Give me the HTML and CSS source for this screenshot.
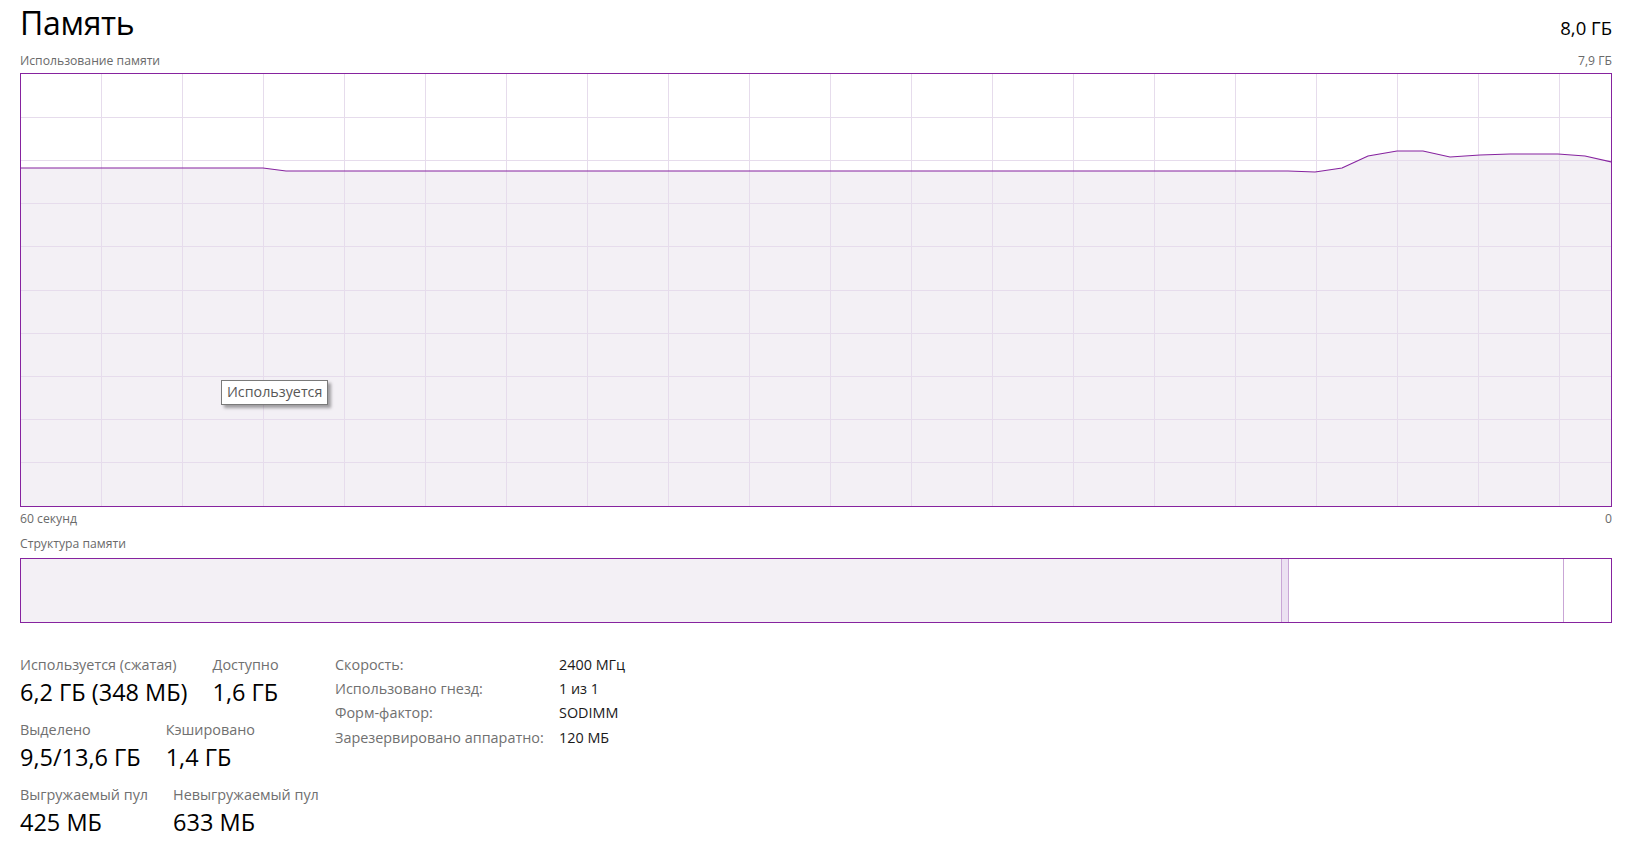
FILE: index.html
```html
<!DOCTYPE html>
<html lang="ru">
<head>
<meta charset="utf-8">
<title>Память</title>
<link rel="stylesheet" href="styles.css">
</head>
<body>
<div class="page">
  <div class="header">
    <div class="title">Память</div>
    <div class="total">8,0 ГБ</div>
  </div>
  <div class="caption-row top-caption">
    <span>Использование памяти</span>
    <span>7,9 ГБ</span>
  </div>
  <div class="chart">
    <svg class="chart-svg" viewBox="0 0 1590 432" preserveAspectRatio="none">
      <polygon class="area" points="-1,94 242,94 265,97 1267,97 1294,98 1321,94 1347,82 1376,77 1402,77 1429,83 1459,81 1489,80 1537,80 1564,82 1591,88 1591,433 -1,433"/>
      <g class="grid">
        <line x1="80" y1="0" x2="80" y2="432"/>
        <line x1="161" y1="0" x2="161" y2="432"/>
        <line x1="242" y1="0" x2="242" y2="432"/>
        <line x1="323" y1="0" x2="323" y2="432"/>
        <line x1="404" y1="0" x2="404" y2="432"/>
        <line x1="485" y1="0" x2="485" y2="432"/>
        <line x1="566" y1="0" x2="566" y2="432"/>
        <line x1="647" y1="0" x2="647" y2="432"/>
        <line x1="728" y1="0" x2="728" y2="432"/>
        <line x1="809" y1="0" x2="809" y2="432"/>
        <line x1="890" y1="0" x2="890" y2="432"/>
        <line x1="971" y1="0" x2="971" y2="432"/>
        <line x1="1052" y1="0" x2="1052" y2="432"/>
        <line x1="1133" y1="0" x2="1133" y2="432"/>
        <line x1="1214" y1="0" x2="1214" y2="432"/>
        <line x1="1295" y1="0" x2="1295" y2="432"/>
        <line x1="1376" y1="0" x2="1376" y2="432"/>
        <line x1="1457" y1="0" x2="1457" y2="432"/>
        <line x1="1538" y1="0" x2="1538" y2="432"/>
        <line x1="0" y1="43.2" x2="1590" y2="43.2"/>
        <line x1="0" y1="86.4" x2="1590" y2="86.4"/>
        <line x1="0" y1="129.6" x2="1590" y2="129.6"/>
        <line x1="0" y1="172.8" x2="1590" y2="172.8"/>
        <line x1="0" y1="216" x2="1590" y2="216"/>
        <line x1="0" y1="259.2" x2="1590" y2="259.2"/>
        <line x1="0" y1="302.4" x2="1590" y2="302.4"/>
        <line x1="0" y1="345.6" x2="1590" y2="345.6"/>
        <line x1="0" y1="388.8" x2="1590" y2="388.8"/>
      </g>
      <polyline class="series" points="-1,94 242,94 265,97 1267,97 1294,98 1321,94 1347,82 1376,77 1402,77 1429,83 1459,81 1489,80 1537,80 1564,82 1591,88"/>
    </svg>
    <div class="tooltip">Используется</div>
  </div>
  <div class="caption-row bottom-caption">
    <span>60 секунд</span>
    <span>0</span>
  </div>
  <div class="caption-row struct-caption">
    <span>Структура памяти</span>
  </div>
  <div class="structure">
    <div class="seg seg-used" style="width: 1261px"></div>
    <div class="seg seg-modified" style="width: 7px"></div>
    <div class="seg seg-standby" style="width: 275px"></div>
    <div class="seg seg-free"></div>
  </div>
  <div class="details">
    <div class="stats">
      <div class="stat-row">
        <div class="stat"><div class="stat-label">Используется (сжатая)</div><div class="stat-value">6,2 ГБ (348 МБ)</div></div>
        <div class="stat"><div class="stat-label">Доступно</div><div class="stat-value">1,6 ГБ</div></div>
      </div>
      <div class="stat-row">
        <div class="stat"><div class="stat-label">Выделено</div><div class="stat-value">9,5/13,6 ГБ</div></div>
        <div class="stat"><div class="stat-label">Кэшировано</div><div class="stat-value">1,4 ГБ</div></div>
      </div>
      <div class="stat-row">
        <div class="stat"><div class="stat-label">Выгружаемый пул</div><div class="stat-value">425 МБ</div></div>
        <div class="stat"><div class="stat-label">Невыгружаемый пул</div><div class="stat-value">633 МБ</div></div>
      </div>
    </div>
    <div class="props">
      <div class="prop-label">Скорость:</div><div class="prop-value">2400 МГц</div>
      <div class="prop-label">Использовано гнезд:</div><div class="prop-value">1 из 1</div>
      <div class="prop-label">Форм-фактор:</div><div class="prop-value">SODIMM</div>
      <div class="prop-label">Зарезервировано аппаратно:</div><div class="prop-value">120 МБ</div>
    </div>
  </div>
</div>
</body>
</html>
```

FILE: styles.css
```css
html, body {
  margin: 0;
  padding: 0;
  background: #ffffff;
  overflow: hidden;
}

body {
  font-family: "Open Sans", "Noto Sans", "Liberation Sans", sans-serif;
  color: #000;
}

.page {
  padding: 0 17px 0 20px;
  height: 844px;
  box-sizing: border-box;
}

.header {
  display: flex;
  justify-content: space-between;
  align-items: baseline;
  height: 52px;
  padding-top: 3px;
  box-sizing: border-box;
}

.title {
  font-size: 32px;
  line-height: 40px;
  font-weight: 400;
  letter-spacing: -0.3px;
}

.total {
  font-size: 18.5px;
  line-height: 40px;
}

.caption-row {
  display: flex;
  justify-content: space-between;
  font-size: 12.2px;
  color: #6a6a6a;
  line-height: 18px;
}

.top-caption {
  height: 21px;
}

.chart {
  position: relative;
  height: 434px;
  border: 1px solid #86239f;
  box-sizing: border-box;
  background: #fff;
}

.chart-svg {
  display: block;
  width: 100%;
  height: 100%;
}

.area {
  fill: #f3f0f5;
}

.grid line {
  stroke: #e6dcec;
  stroke-width: 1;
  vector-effect: non-scaling-stroke;
  shape-rendering: crispEdges;
}

.series {
  fill: none;
  stroke: #86239f;
  stroke-width: 1.2;
  vector-effect: non-scaling-stroke;
}

.tooltip {
  position: absolute;
  left: 200px;
  top: 306px;
  padding: 1px 5px 2px;
  border: 1px solid #7a7a7a;
  background: #fff;
  font-size: 14.3px;
  line-height: 20px;
  color: #575757;
  box-shadow: 3px 3px 3px rgba(0, 0, 0, 0.35);
}

.bottom-caption {
  margin-top: 3px;
}

.struct-caption {
  margin-top: 7px;
  height: 23px;
}

.structure {
  display: flex;
  height: 65px;
  border: 1px solid #86239f;
  box-sizing: border-box;
}

.seg {
  height: 100%;
  box-sizing: border-box;
}

.seg-used {
  background: #f3f0f5;
  border-right: 1px solid #c9a6d6;
}

.seg-modified {
  background: #ece1f2;
  border-right: 1px solid #c9a6d6;
}

.seg-standby {
  background: #fff;
  border-right: 1px solid #c9a6d6;
}

.seg-free {
  flex: 1;
  background: #fff;
}

.details {
  display: flex;
  margin-top: 32px;
}

.stats {
  flex: 0 0 315px;
  display: flex;
  flex-direction: column;
}

.stat-row {
  display: flex;
  gap: 25px;
  height: 65px;
}

.stat-label {
  font-size: 14.4px;
  line-height: 20px;
  color: #707070;
  white-space: nowrap;
}

.stat-value {
  font-size: 23.5px;
  line-height: 35px;
  color: #000;
  white-space: nowrap;
}

.props {
  display: grid;
  grid-template-columns: 224px auto;
  grid-auto-rows: 24.2px;
  align-content: start;
  font-size: 14.4px;
  line-height: 20px;
}

.prop-label {
  color: #707070;
  white-space: nowrap;
}

.prop-value {
  color: #1a1a1a;
  white-space: nowrap;
}
```
